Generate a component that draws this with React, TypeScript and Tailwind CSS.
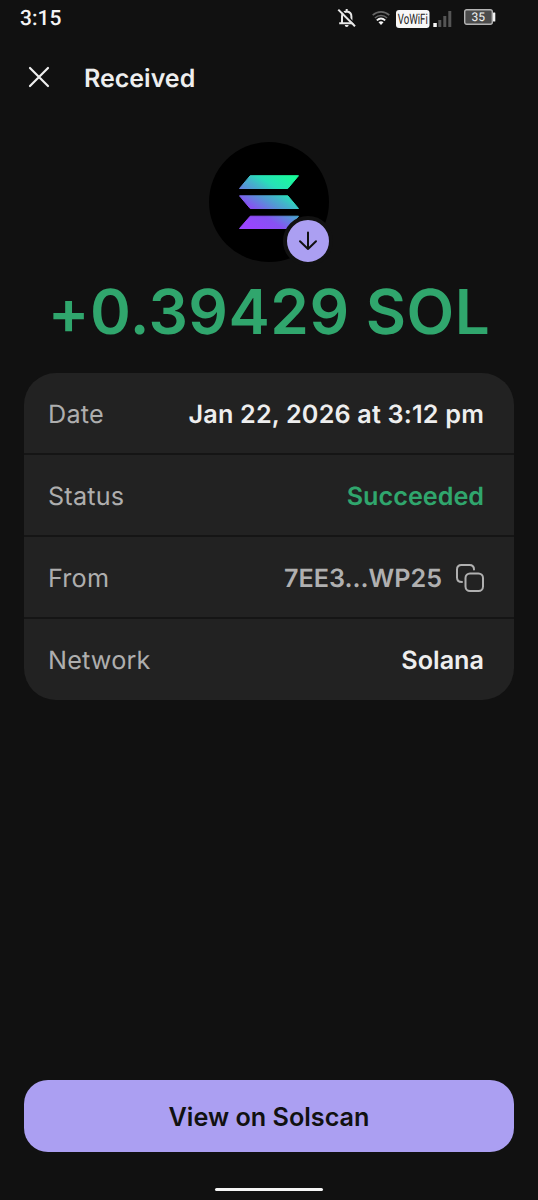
import React from 'react';

interface DetailRowProps {
  label: string;
  children: React.ReactNode;
}

const StatusBar: React.FC = () => {
  return (
    <div className="flex h-9 shrink-0 items-center justify-between pl-5 pr-[42px]">
      <span className="pt-px font-['Roboto',sans-serif] text-[21px] font-medium leading-6 text-[#f5f5f5]">3:15</span>
      <div className="flex items-center">
        {/* Muted bell */}
        <svg className="h-5 w-5" viewBox="0 0 20 20" fill="none">
          <path
            d="M5 15V8.400C5 5.600 6.900 3.900 9.700 3.600C12.500 3.900 14.400 5.600 14.400 8.400V15M9.700 1V3.600M2.200 15.200H17"
            stroke="#e8e8e8"
            strokeWidth="2"
          />
          <path d="M7.800 17H11.600C11.500 18.300 10.800 19 9.700 19S7.900 18.300 7.800 17Z" fill="#e8e8e8" />
          <path d="M2.600 0.600L19 17" stroke="#111111" strokeWidth="1.600" />
          <path d="M1.300 1.600L18 18.300" stroke="#e8e8e8" strokeWidth="2" />
        </svg>
        {/* Wifi */}
        <svg className="ml-[15px] h-4 w-[18px]" viewBox="0 0 18 16" fill="none">
          <path d="M0.700 5.200C5.500 0.700 12.500 0.700 17.300 5.200" stroke="#666666" strokeWidth="1.700" />
          <path d="M2.900 8C6.500 4.700 11.500 4.700 15.100 8" stroke="#666666" strokeWidth="1.600" />
          <path d="M4.800 10.400C7.400 8 10.600 8 13.200 10.400" stroke="#f5f5f5" strokeWidth="1.900" />
          <path d="M6.500 12.200C8 11 10 11 11.500 12.200L9 15Z" fill="#f5f5f5" />
        </svg>
        {/* VoWiFi */}
        <svg className="ml-1.5 mt-0.5 h-[18px] w-[34px] overflow-visible" viewBox="0 0 34 18">
          <rect width="33.500" height="18" rx="3" fill="#f7f7f7" />
          <text
            x="1.800"
            y="14.300"
            textLength="30"
            lengthAdjust="spacingAndGlyphs"
            fontFamily="Roboto, sans-serif"
            fontSize="14.500"
            fill="#222222"
          >
            VoWiFi
          </text>
        </svg>
        {/* Signal */}
        <svg className="ml-[3px] mt-0.5 h-4 w-5" viewBox="0 0 20 16">
          <rect x="0.300" y="12" width="3.500" height="4" fill="#f5f5f5" />
          <rect x="5.300" y="9" width="3" height="7" fill="#555555" />
          <rect x="10.300" y="5" width="3" height="11" fill="#555555" />
          <rect x="15.300" y="0" width="3" height="16" fill="#555555" />
        </svg>
        {/* Battery */}
        <svg className="ml-[11px] h-4 w-8 -mt-0.5" viewBox="0 0 32 16">
          <rect x="0.700" y="0.700" width="27.600" height="14.600" rx="2" fill="#4c4c4c" stroke="#b4b4b4" strokeWidth="1.400" />
          <rect x="29" y="3.500" width="2.300" height="9" rx="0.500" fill="#f0f0f0" />
          <text x="14.200" y="12.300" textAnchor="middle" fontFamily="Roboto, sans-serif" fontSize="12" fill="#f5f5f5">
            35
          </text>
        </svg>
      </div>
    </div>
  );
};

const SolanaLogo: React.FC = () => {
  return (
    <svg className="h-[54px] w-[60px]" viewBox="0 0 60 54">
      <defs>
        <linearGradient id="solana" gradientUnits="userSpaceOnUse" x1="10" y1="57" x2="50" y2="-3">
          <stop offset="0.08" stopColor="#9945ff" />
          <stop offset="0.3" stopColor="#8752f3" />
          <stop offset="0.5" stopColor="#5497d5" />
          <stop offset="0.6" stopColor="#43b4ca" />
          <stop offset="0.72" stopColor="#28e0b9" />
          <stop offset="0.97" stopColor="#19fb9b" />
        </linearGradient>
      </defs>
      <g fill="url(#solana)" stroke="url(#solana)" strokeLinejoin="round" strokeWidth="1">
        <path d="M11.200 0.700H59.500L48.800 13.500H0.500Z" />
        <path d="M0.500 20.800H48.800L59.500 33.500H11.200Z" />
        <path d="M11.200 41.200H59.500L48.800 53.500H0.500Z" />
      </g>
    </svg>
  );
};

const DetailRow: React.FC<DetailRowProps> = ({ label, children }) => {
  return (
    <div className="flex h-[82px] items-center justify-between border-b-2 border-[#151515] pl-6 pr-[30px] pt-[3px] text-[25.2px] leading-8 last:h-[81px] last:border-b-0 last:pt-0.5">
      <span className="tracking-[0.2px] text-[#aeaeae]">{label}</span>
      {children}
    </div>
  );
};

const App: React.FC = () => {
  return (
    <div className="flex h-[1200px] w-[538px] flex-col overflow-hidden bg-[#111111] font-['Inter',sans-serif] [text-rendering:geometricPrecision]">
      <StatusBar />

      {/* Header */}
      <header className="flex h-[82px] shrink-0 items-center pl-7">
        <button aria-label="Close">
          <svg className="h-[22px] w-[22px]" viewBox="0 0 22 22" fill="none">
            <path d="M2 2L20 20M20 2L2 20" stroke="#f0f0f0" strokeWidth="2.200" strokeLinecap="round" />
          </svg>
        </button>
        <h1 className="ml-[34px] pt-[3px] text-[25px] font-semibold leading-8 text-[#eeeeee]">Received</h1>
      </header>

      {/* Token and amount */}
      <section className="mt-6 flex shrink-0 flex-col items-center">
        <div className="relative flex h-[120px] w-[120px] items-center justify-center rounded-full bg-black">
          <SolanaLogo />
          <div className="absolute -bottom-1 -right-1 flex h-[50px] w-[50px] items-center justify-center rounded-full border-4 border-[#111111] bg-[#ab9ff2]">
            <svg className="h-5 w-5" viewBox="0 0 20 20" fill="none">
              <path
                d="M10 1.500V18M2 10.200L10 18L18 10.200"
                stroke="#111111"
                strokeWidth="2"
                strokeLinecap="round"
                strokeLinejoin="round"
              />
            </svg>
          </div>
        </div>
        <p className="mt-3 whitespace-nowrap text-[62px] font-semibold leading-[76px] tracking-[0.5px] text-[#30a66d]">+0.39429 SOL</p>
      </section>

      {/* Details */}
      <section className="mx-6 mt-[23px] shrink-0 overflow-hidden rounded-[32px] bg-[#222222]">
        <DetailRow label="Date">
          <span className="font-semibold tracking-[0.18px] text-[#eeeeee]">Jan 22, 2026 at 3:12 pm</span>
        </DetailRow>
        <DetailRow label="Status">
          <span className="font-semibold text-[#30a66d]">Succeeded</span>
        </DetailRow>
        <DetailRow label="From">
          <div className="flex items-center gap-3.5 text-[#b0b0b0]">
            <span className="font-semibold">7EE3...WP25</span>
            <svg className="-mt-0.5 h-7 w-7" viewBox="0 0 28 28" fill="none" stroke="currentColor" strokeWidth="2" strokeLinecap="round">
              <rect x="9.500" y="9.500" width="17.500" height="17.500" rx="4.500" />
              <path d="M6 18C3 18 1 16.500 1 13.500V5.500C1 2.800 2.800 1 5.500 1H13.500C16.500 1 18 3 18 5.500" />
            </svg>
          </div>
        </DetailRow>
        <DetailRow label="Network">
          <span className="font-semibold text-[#eeeeee]">Solana</span>
        </DetailRow>
      </section>

      {/* Footer */}
      <footer className="mt-auto flex shrink-0 flex-col items-center px-6">
        <button className="h-[72px] w-full rounded-3xl bg-[#ab9ff2] pt-[3px] text-[25.2px] font-semibold text-[#111111]">
          View on Solscan
        </button>
        <div className="mb-[9px] mt-9 h-[3px] w-[108px] rounded-full bg-[#f5f5f5]" />
      </footer>
    </div>
  );
};

export default App;
